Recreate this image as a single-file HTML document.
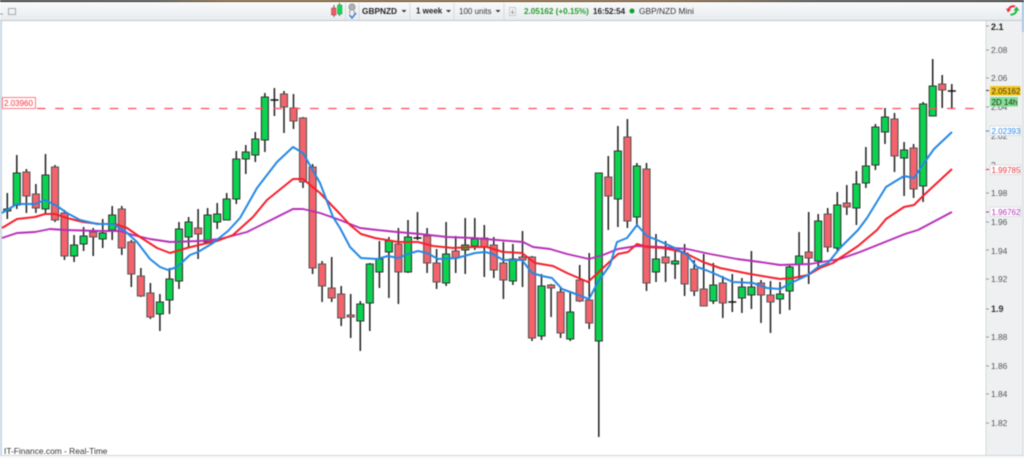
<!DOCTYPE html>
<html><head><meta charset="utf-8"><style>
html,body{margin:0;padding:0;background:#fff;width:1024px;height:459px;overflow:hidden}
#w{position:relative;width:1024px;height:459px;filter:blur(.5px);font-family:"Liberation Sans",sans-serif}
#w svg{position:absolute;left:0;top:0}
text{font-family:"Liberation Sans",sans-serif}
</style></head><body><div id="w">
<svg width="1024" height="459" viewBox="0 0 1024 459">
<defs><linearGradient id="tb" x1="0" y1="0" x2="0" y2="1"><stop offset="0" stop-color="#f8fafb"/><stop offset="1" stop-color="#e8ecef"/></linearGradient>
<linearGradient id="top" x1="0" y1="0" x2="1" y2="0"><stop offset="0" stop-color="#3c3c3c"/><stop offset=".15" stop-color="#444"/><stop offset=".22" stop-color="#7a5a35"/><stop offset=".66" stop-color="#7a5a35"/><stop offset=".8" stop-color="#444"/><stop offset="1" stop-color="#3c3c3c"/></linearGradient></defs>
<rect width="1024" height="459" fill="#fff"/>
<rect y="2" width="1024" height="18" fill="url(#tb)"/>
<rect width="1024" height="2" fill="url(#top)"/>
<rect y="20" width="1024" height="1" fill="#c2c7cb"/>
<rect x="0" y="21" width="2" height="434" fill="#c9d8e6"/>
<rect x="986" y="21" width="36" height="434" fill="#eff0f2"/>
<rect x="985.500" y="21" width="1" height="434" fill="#d5d8db"/>
<rect x="1022" y="2" width="2" height="30" fill="#a9c4e4"/>
<rect x="1022" y="32" width="2" height="423" fill="#dfe3e6"/>
<rect y="455" width="1024" height="1" fill="#cfd6d9"/>
<rect y="456" width="1024" height="3" fill="#fbfbfb"/>
<path d="M0 14H3" stroke="#999" stroke-width="1"/>
<rect x="8.500" y="8.500" width="7" height="6" fill="none" stroke="#a7a9ab"/>

<!-- toolbar -->
<path d="M334 5V17M339.500 3V16" stroke="#333" stroke-width=".8"/>
<rect x="331.500" y="8" width="4.500" height="7" fill="#f0596a" stroke="#a33" stroke-width=".5"/>
<rect x="337.500" y="5" width="4.500" height="9" fill="#14d35b" stroke="#292" stroke-width=".5"/>
<path d="M345.500 3V20M359 3V20M410 3V20M454 3V20M504 3V20" stroke="#d8dbde" stroke-width="1"/>
<circle cx="352" cy="7" r="3.200" fill="#b0b0b0" stroke="#888" stroke-width=".6"/>
<path d="M350 10L349.500 14M354 10L354.500 14" stroke="#aaa" stroke-width="1.200"/>
<path d="M349.500 15L352 18L356 13" fill="none" stroke="#3a7fd5" stroke-width="1.500"/>
<g font-size="8.500" fill="#222">
<text x="362" y="14" font-weight="700" font-size="8.300">GBPNZD</text>
<path d="M401.500 10h5l-2.500 2.500z" fill="#333"/>
<text x="416" y="13.500" font-weight="700" font-size="8">1 week</text>
<path d="M446 10h5l-2.500 2.500z" fill="#333"/>
<text x="459" y="14" font-size="8" fill="#333">100 units</text>
<path d="M495.500 10h5l-2.500 2.500z" fill="#333"/>
<rect x="509.500" y="7.500" width="6" height="8" fill="#f4f4f4" stroke="#bbb" stroke-width=".7"/>
<path d="M512.500 9.500v4M511 12l1.500 1.500L514 12" fill="none" stroke="#888" stroke-width=".7"/>
<text x="524" y="14" font-weight="700" font-size="8.150" fill="#2a9a2e">2.05162 (+0.15%)</text>
<text x="593" y="14" font-weight="700" font-size="8" fill="#222">16:52:54</text>
<circle cx="632" cy="11" r="2.500" fill="#12a02a"/>
<text x="639" y="14" font-size="8.400" fill="#333">GBP/NZD Mini</text>
</g>
<!-- refresh icon -->
<path d="M1015 6.500A5 5 0 0 0 1008.500 10" fill="none" stroke="#ee2d3a" stroke-width="2"/>
<path d="M1006 8.500L1008 12.500L1011 9.500z" fill="#ee2d3a"/>
<path d="M1010.500 14.500A5 5 0 0 0 1016.500 10" fill="none" stroke="#25b840" stroke-width="2"/>
<path d="M1013.500 10.500L1019.500 10.500L1016.500 6.500z" fill="#25b840"/>

<!-- wicks -->
<path stroke="#1e1e1e" stroke-width="1.500" fill="none" d="M7.300 193V219M16.800 155V209M26.400 169V213M35.900 184V213M45.500 154V215M55 165V222M64.500 210V260M74.100 235V262M83.600 227V251M93.200 228V256M102.700 219V248M112.200 206V240M121.800 206V255M131.300 240V287M140.900 268V297M150.400 283V319M159.900 294V331M169.500 268V314M179 222V289M188.600 217V248M198.100 209V259M207.600 208V243M217.200 203V229M226.700 193V220M236.300 151V204M245.800 145V174M255.300 132V162M264.900 93V152M274.400 88V116M284 91V133M293.500 94V129M303 117V188M312.600 164V274M322.100 261V302M331.700 257V302M341.200 286V326M350.700 294V338M360.300 301V351M369.800 263V331M379.400 241V288M388.900 237V298M398.400 228V304M408 220V273M417.500 212V240M427.100 228V273M436.600 249V289M446.100 222V286M455.700 236V273M465.200 218V274M474.800 218V250M484.300 225V277M493.800 237V278M503.400 242V299M512.900 244V285M522.500 231V287M532 256V341M541.500 274V340M551.100 284V317M560.600 287V338M570.200 292V341M579.700 265V302M589.200 253V329M598.800 173V437M608.300 156V230M617.900 126V227M627.400 119V228M636.900 163V227M646.500 163V291M656 234V282M665.600 241V282M675.100 250V279M684.600 244V296M694.200 260V296M703.700 254V306M713.300 263V304M722.800 276V318M732.300 274V312M741.900 278V313M751.400 251V309M761 280V323M770.500 281V333M780 282V314M789.600 265V310M799.100 232V279M808.700 212V284M818.200 214V267M827.700 208V252M837.300 192V252M846.800 185V215M856.400 171V225M865.900 147V188M875.400 124V170M885 108V144M894.500 113V172M904.100 142V196M913.600 144V198M923.100 102V202M932.700 59V116M942.200 75V108M951.800 84V108"/>
<!-- doji bars -->
<path stroke="#111" stroke-width="1.400" d="M270.500 100h8M413.500 238h8M728.300 302h8M947.800 91h8"/>
<!-- green bodies -->
<path fill="#0ad44f" stroke="#333" stroke-width="1.100" d="M3.800 209h7V211h-7zM13.300 173h7V205h-7zM42 175h7V209h-7zM70.600 245h7V256h-7zM80.100 236h7V244h-7zM99.200 233h7V239h-7zM108.700 215h7V230h-7zM156.400 302h7V314h-7zM166 279h7V300h-7zM175.500 229h7V281h-7zM185.100 222h7V237h-7zM204.100 215h7V242h-7zM213.700 214h7V222h-7zM223.200 199h7V220h-7zM232.800 159h7V199h-7zM242.300 152h7V159h-7zM251.800 139h7V155h-7zM261.400 97h7V140h-7zM356.800 304h7V321h-7zM366.300 264h7V303h-7zM375.900 259h7V272h-7zM385.400 241h7V252h-7zM404.500 237h7V272h-7zM442.600 254h7V283h-7zM461.700 245h7V250h-7zM471.300 239h7V246h-7zM509.400 259h7V281h-7zM538 286h7V336h-7zM566.700 312h7V339h-7zM595.300 173h7V341h-7zM614.400 151h7V199h-7zM633.400 166h7V217h-7zM652.500 259h7V272h-7zM671.600 261h7V264h-7zM709.800 285h7V301h-7zM738.400 287h7V298h-7zM747.900 287h7V295h-7zM776.500 294h7V299h-7zM786.100 267h7V291h-7zM795.600 256h7V264h-7zM814.700 221h7V261h-7zM833.800 205h7V248h-7zM852.900 184h7V208h-7zM862.400 166h7V183h-7zM871.900 127h7V165h-7zM881.500 117h7V132h-7zM900.600 150h7V158h-7zM919.600 104h7V186h-7zM929.200 86h7V116h-7z"/>
<!-- red bodies -->
<path fill="#f4626b" stroke="#555" stroke-width="1.100" d="M22.900 172h7V196h-7zM32.400 194h7V208h-7zM51.500 167h7V220h-7zM61 213h7V256h-7zM89.700 232h7V237h-7zM118.300 209h7V248h-7zM127.800 242h7V274h-7zM137.400 276h7V296h-7zM146.900 293h7V317h-7zM194.600 228h7V234h-7zM280.500 94h7V107h-7zM290 108h7V121h-7zM299.500 118h7V182h-7zM309.100 167h7V268h-7zM318.600 264h7V286h-7zM328.200 288h7V298h-7zM337.700 294h7V318h-7zM347.200 315h7V317h-7zM394.900 244h7V272h-7zM423.600 236h7V263h-7zM433.100 263h7V282h-7zM452.200 251h7V258h-7zM480.800 238h7V247h-7zM490.300 245h7V270h-7zM499.900 263h7V280h-7zM519 257h7V260h-7zM528.500 257h7V338h-7zM547.600 285h7V288h-7zM557.100 292h7V333h-7zM576.200 280h7V301h-7zM585.700 300h7V323h-7zM604.800 177h7V196h-7zM623.900 137h7V221h-7zM643 169h7V283h-7zM662.100 257h7V263h-7zM681.100 253h7V284h-7zM690.700 269h7V291h-7zM700.200 289h7V306h-7zM719.300 283h7V303h-7zM757.500 283h7V295h-7zM767 295h7V302h-7zM805.200 252h7V258h-7zM824.200 214h7V247h-7zM843.300 203h7V207h-7zM891 119h7V156h-7zM910.100 148h7V189h-7zM938.700 84h7V90h-7z"/>

<!-- purple MA -->
<path fill="none" stroke="#b62fb8" stroke-width="1.900" stroke-linejoin="round" d="M2 238L17 233L35 232L50 229L65 230L100 231L120 231L133 235L150 239L170 242L200 241L220 239L247 232L277 217L293 209L303 209L320 213L340 220L360 228L377 230L397 232L420 234L447 237L473 238L497 240L523 242L533 247L550 249L567 254L589 259L603 255L618 249L637 246L660 247L687 249L710 254L737 259L760 262L780 265L810 264L840 259L860 252L880 244L905 234L918 230L952 212"/>
<!-- red MA -->
<path fill="none" stroke="#f5202c" stroke-width="2" stroke-linejoin="round" d="M2 228L17 219L35 217L45 214L55 214L67 218L83 222L100 224L115 224L127 228L140 237L157 248L170 253L187 248L203 244L217 241L233 235L253 217L267 200L293 179L303 179L320 193L340 214L350 225L361 234L375 238L398 242L418 242L433 246L453 248L473 247L487 247L503 252L522 253L535 263L553 266L567 273L588 282L603 268L618 254L628 252L637 244L647 247L663 248L683 252L703 262L720 268L750 274L780 279L793 278L808 275L820 268L833 263L840 258L858 246L877 230L886 219L904 207L914 205L924 195L952 169"/>
<!-- blue MA -->
<path fill="none" stroke="#2588e4" stroke-width="2" stroke-linejoin="round" d="M2 213L17 204L35 204L45 200L57 206L67 213L80 220L97 224L113 224L125 231L137 242L150 259L160 267L168 270L177 267L190 255L198 252L213 243L228 231L240 218L257 188L277 162L293 147L303 153L320 183L333 217L340 228L350 247L361 258L377 259L388 256L398 258L408 254L418 251L427 253L438 259L457 258L475 253L485 252L493 254L503 260L522 260L532 273L542 276L552 278L562 289L573 293L589 299L598 282L610 265L617 242L627 238L637 225L647 236L657 240L675 248L687 255L697 267L703 269L713 273L733 282L753 283L767 288L780 289L793 282L808 275L818 267L828 263L840 248L858 230L867 218L886 187L904 176L914 178L924 163L934 149L952 132"/>

<!-- dashed level -->
<path d="M37 108.500H982" stroke="#ff4a58" stroke-width="1.200" stroke-dasharray="8.500 9.700"/>
<rect x="2.500" y="97.500" width="33" height="11" fill="#fff" stroke="#ff7b84" stroke-width="1"/>
<text x="4" y="106" font-size="8" fill="#f0323e">2.03960</text>

<!-- axis -->
<g font-size="8.400" fill="#555">
<path stroke="#999" stroke-width="1" d="M986 26h3M986 50h3M986 78h3M986 107h3M986 193h3M986 222h3M986 250h3M986 279h3M986 309h3M986 337h3M986 366h3M986 394h3M986 423h3"/>
<path stroke="#333" stroke-width="1" d="M986 90.500h3"/>
<text x="991" y="30" font-weight="700" font-size="9" fill="#222">2.1</text>
<text x="991" y="53">2.08</text>
<text x="991" y="81">2.06</text>
<text x="991" y="110">2.04</text>
<text x="991" y="139">2.02</text>
<text x="991" y="168">2</text>
<text x="991" y="196">1.98</text>
<text x="991" y="225">1.96</text>
<text x="991" y="254">1.94</text>
<text x="991" y="282">1.92</text>
<text x="991" y="312" font-weight="700" font-size="9" fill="#333">1.9</text>
<text x="991" y="340">1.88</text>
<text x="991" y="369">1.86</text>
<text x="991" y="397">1.84</text>
<text x="991" y="426">1.82</text>
</g>
<rect x="990" y="86" width="30.500" height="9.500" fill="#f5c518"/>
<text x="991.500" y="94" font-size="8" fill="#333">2.05162</text>
<rect x="990" y="97" width="28" height="9.500" fill="#7fe28f"/>
<text x="991.500" y="105" font-size="8" fill="#222">2D 14h</text>
<path d="M986 131h3" stroke="#2588e4"/>
<rect x="990" y="126" width="30.500" height="9.500" fill="#fff" stroke="#cfd3d6" stroke-width=".7"/>
<text x="991.500" y="134" font-size="8" fill="#2588e4">2.02393</text>
<path d="M986 169.500h3" stroke="#f5202c"/>
<rect x="990" y="165" width="30.500" height="9.500" fill="#fff" stroke="#cfd3d6" stroke-width=".7"/>
<text x="991.500" y="173" font-size="8" fill="#e8323c">1.99785</text>
<path d="M986 212h3" stroke="#b62fb8"/>
<rect x="990" y="207" width="30.500" height="9.500" fill="#fff" stroke="#cfd3d6" stroke-width=".7"/>
<text x="991.500" y="215" font-size="8" fill="#b62fb8">1.96762</text>

<text x="4" y="454" font-size="8.400" fill="#333">IT-Finance.com - Real-Time</text>
</svg>
</div></body></html>
